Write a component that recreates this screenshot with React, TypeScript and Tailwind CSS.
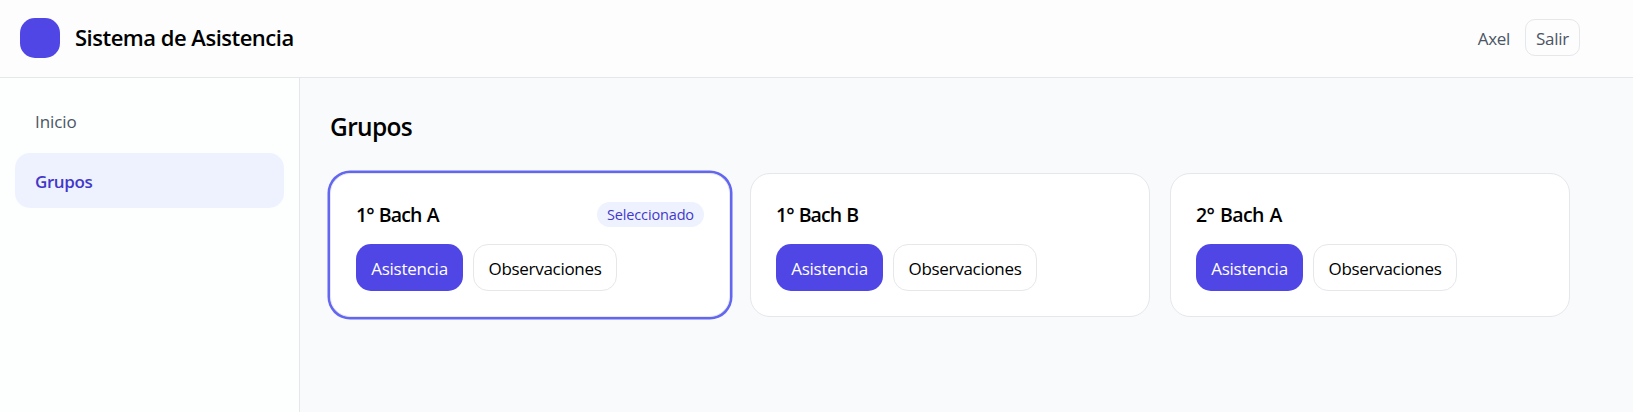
type Group = { name: string; selected?: boolean; nameClass: string };

const groups: Group[] = [
  { name: '1° Bach A', selected: true, nameClass: 'tracking-[-0.9px] [word-spacing:1px]' },
  { name: '1° Bach B', nameClass: 'tracking-[-0.95px] [word-spacing:1px]' },
  { name: '2° Bach A', nameClass: 'tracking-[-0.55px] [word-spacing:1px]' },
];

function GroupCard({ name, selected, nameClass }: Group) {
  return (
    <article
      className={
        selected
          ? 'h-36 rounded-[20px] border border-[#e5e7eb] bg-white px-[25px] pt-[25px] ring-[2.5px] ring-[#6366f1]'
          : 'h-36 rounded-[20px] border border-[#e5e7eb] bg-white px-[25px] pt-[25px]'
      }
    >
      <div className="flex h-[31px] items-center justify-between">
        <h3 className={`text-[19.5px] leading-[31px] font-semibold whitespace-nowrap ${nameClass}`}>{name}</h3>
        {selected && (
          <span className="flex h-[25px] w-[107px] items-center justify-center rounded-full bg-[#eef2ff] text-[14.5px] tracking-[-0.15px] text-[#4338ca]">
            Seleccionado
          </span>
        )}
      </div>
      <div className="mt-[14px] flex gap-[10px]">
        <button className="h-[47px] w-[107px] rounded-[15px] bg-[#4f46e5] pt-[2px] text-[17px] tracking-[-0.25px] whitespace-nowrap text-white">
          Asistencia
        </button>
        <button className="h-[47px] w-[144px] rounded-[15px] border border-[#e5e7eb] pt-[2px] text-[17px] tracking-[-0.3px] whitespace-nowrap">
          Observaciones
        </button>
      </div>
    </article>
  );
}

export default function App() {
  return (
    <div className="flex h-[412px] flex-col overflow-hidden bg-[#f9fafc] font-['Open_Sans','Noto_Sans',sans-serif] text-black">
      <header className="h-[78px] shrink-0 border-b border-[#e5e7eb] bg-[#fdfdfe]">
        <div className="flex h-[75px] max-w-[1600px] items-center justify-between px-5">
          <div className="flex items-center gap-[15px]">
            <div className="mt-px size-10 rounded-[15px] bg-[#4f46e5]" />
            <h1 className="text-[22px] leading-[35px] font-semibold tracking-[-0.5px]">Sistema de Asistencia</h1>
          </div>
          <div className="flex items-center gap-[15px] text-[17px] leading-[25px] tracking-[-0.3px] text-[#4b5563]">
            <span className="pt-px">Axel</span>
            <button className="h-[37px] w-[55px] rounded-[10px] border border-[#e5e7eb] pt-px">Salir</button>
          </div>
        </div>
      </header>
      <div className="flex min-h-0 flex-1">
        <aside className="w-[300px] shrink-0 border-r border-[#e5e7eb] bg-[#fdfefe] p-[15px]">
          <nav className="flex flex-col gap-[5px] text-[17px] leading-[25px]">
            <a className="flex h-[55px] items-center rounded-[15px] px-5 pt-[2px] tracking-[-0.1px] text-[#4b5563]">Inicio</a>
            <a className="flex h-[55px] items-center rounded-[15px] bg-[#eef2ff] px-5 pt-[2px] font-semibold tracking-[-0.4px] text-[#4338ca]">
              Grupos
            </a>
          </nav>
        </aside>
        <main className="w-[1300px] px-[30px] pt-[31px]">
          <h2 className="text-[24.5px] leading-[35px] font-semibold tracking-[-0.65px]">Grupos</h2>
          <div className="mt-[29px] grid grid-cols-3 gap-5">
            {groups.map((g) => (
              <GroupCard key={g.name} {...g} />
            ))}
          </div>
        </main>
      </div>
    </div>
  );
}
